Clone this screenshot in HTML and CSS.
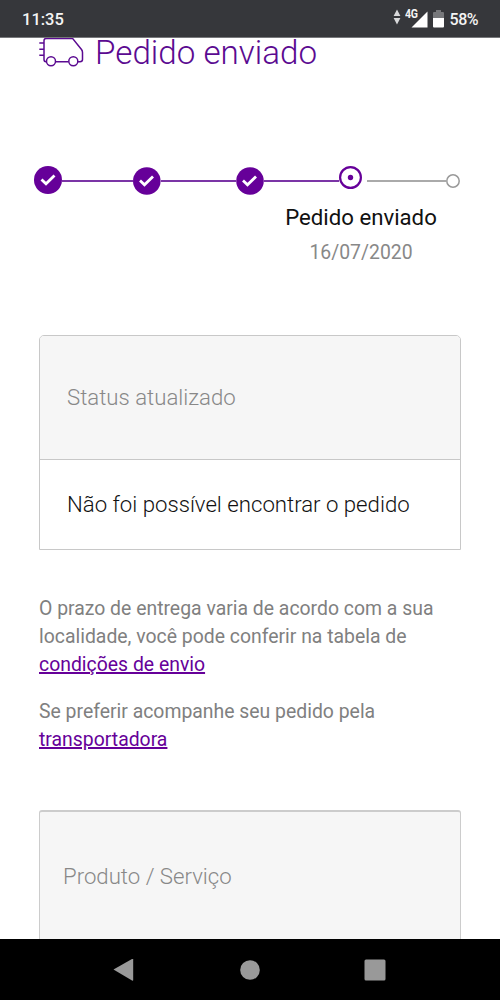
FILE: index.html
```html
<!DOCTYPE html>
<html lang="pt-BR">
<head>
<meta charset="utf-8">
<title>Pedido enviado</title>
<link rel="stylesheet" href="styles.css">
</head>
<body>
<div class="screen">
  <header class="statusbar">
    <span class="clock">11:35</span>
    <div class="indicators">
      <svg class="data" width="8" height="16" viewBox="0 0 8 16"><path d="M4 .5 7.400 7H.6zM4 15.500 7.400 9H.6z" fill="#d8d8da"/></svg>
      <span class="network">4G</span>
      <svg class="signal" width="17" height="17" viewBox="0 0 17 17"><path d="M16.5 .5v16H.5z" fill="#fff"/></svg>
      <svg class="battery" width="11" height="18" viewBox="0 0 11 18"><path d="M3 0h5v2h2a1 1 0 0 1 1 1v5H0V3a1 1 0 0 1 1-1h2z" fill="#77787b"/><path d="M0 8h11v8.5a1 1 0 0 1-1 1H1a1 1 0 0 1-1-1z" fill="#fff"/></svg>
      <span class="percent">58%</span>
    </div>
  </header>
  <main class="content">
    <h1 class="title">
      <svg class="van" width="48" height="34" viewBox="0 0 48 34" fill="none" stroke="#5b0a91" stroke-width="1.500"><path d="M8.500 23.700H8Q6 23.700 6 21.500V2.500Q6 .4 8.500 .4H34.500L43.500 11.500Q44.500 12.800 44.500 14.500V21.500Q44.500 23.700 42 23.700H40M17.700 23.700H30.600M1.300 5H6M1.300 11.200H6M1.300 17.300H6"/><circle cx="13" cy="23.200" r="4.500"/><circle cx="35.300" cy="23.200" r="4.500"/></svg>
      <span class="title-text">Pedido enviado</span>
    </h1>
    <div class="steps">
      <svg class="step" width="28" height="30" viewBox="0 0 28 30"><circle cx="14" cy="14" r="14" fill="#660099"/><path d="M7.500 13.500 12 17.800 20.500 9.500" fill="none" stroke="#fff" stroke-width="2.800"/></svg>
      <span class="line"></span>
      <svg class="step" width="28" height="30" viewBox="0 0 28 30"><circle cx="13.800" cy="15" r="13.800" fill="#660099"/><path d="M7 14.500 11.500 18.800 20 10.500" fill="none" stroke="#fff" stroke-width="2.800"/></svg>
      <span class="line line-second"></span>
      <svg class="step" width="28" height="30" viewBox="0 0 28 30"><circle cx="14" cy="15" r="13.800" fill="#660099"/><path d="M7 14.500 11.500 18.800 20 10.500" fill="none" stroke="#fff" stroke-width="2.800"/></svg>
      <span class="line line-third"></span>
      <svg class="step" width="24" height="30" viewBox="0 0 24 30"><circle cx="11.500" cy="11.500" r="10.400" fill="#fff" stroke="#660099" stroke-width="2.200"/><circle cx="11.500" cy="11.500" r="2.700" fill="#660099"/></svg>
      <span class="line line-pending"></span>
      <svg class="step" width="14" height="30" viewBox="0 0 14 30"><circle cx="7" cy="15" r="6.200" fill="#fff" stroke="#999" stroke-width="1.500"/></svg>
    </div>
    <div class="current">
      <div class="current-name"><span>Pedido enviado</span></div>
      <div class="current-date"><span>16/07/2020</span></div>
    </div>
    <section class="card">
      <div class="card-head"><span>Status atualizado</span></div>
      <div class="card-body"><span class="message">Não foi possível encontrar o pedido</span></div>
    </section>
    <p class="note"><span>O prazo de entrega varia de acordo com a sua</span><br><span>localidade, você pode conferir na tabela de</span><br><a href="#">condições de envio</a></p>
    <p class="note"><span>Se preferir acompanhe seu pedido pela</span><br><a href="#">transportadora</a></p>
    <section class="product"><span>Produto / Serviço</span></section>
  </main>
  <nav class="navbar">
    <svg width="21" height="24" viewBox="0 0 21 24"><path d="M.5 11.500 19 1Q20.200 .7 20.200 1.500V22Q20.200 23 19 22.500z" fill="#999"/></svg>
    <svg width="22" height="20" viewBox="0 0 22 20"><circle cx="12" cy="10" r="9.800" fill="#999"/></svg>
    <svg width="22" height="22" viewBox="0 0 22 22"><rect x=".5" y=".5" width="21" height="21" rx="1.500" fill="#999"/></svg>
  </nav>
</div>
</body>
</html>
```
FILE: styles.css
```css
* { box-sizing: border-box; }
body { margin: 0; background: #fff; font-family: Roboto, sans-serif; }
svg { display: block; flex: none; }
.screen { width: 500px; height: 1000px; display: flex; flex-direction: column; overflow: hidden; }
.statusbar { height: 38px; flex: none; background: #36373b; border-bottom: 1px solid #77787b; display: flex; justify-content: space-between; padding: 0 22px; color: #f4f4f4; }
.clock { font-size: 16.500px; font-weight: 500; line-height: 39px; }
.indicators { display: flex; align-items: flex-start; }
.data { margin-top: 9px; }
.network { font-size: 12px; font-weight: 700; line-height: 14px; margin: 7px 0 0 4px; width: 13px; letter-spacing: -.4px; transform: scaleX(.88); transform-origin: left; }
.signal { margin: 11px 0 0 -7px; }
.battery { margin: 10px 0 0 5px; }
.percent { font-size: 16px; font-weight: 500; line-height: 39px; margin-left: 6px; letter-spacing: -.5px; }
.content { flex: 1; min-height: 0; padding: 0 39px; white-space: nowrap; }
.title { margin: 0; height: 34px; display: flex; align-items: flex-start; color: #5b0a91; font-weight: 300; font-size: 33.200px; line-height: 29px; }
.van { margin: 0 0 0 -1px; }
.title-text { margin-left: 9px; }
.steps { display: flex; margin: 94px 0 0 -5px; height: 30px; width: 428px; }
.line { flex: none; width: 71px; height: 2px; margin-top: 14px; background: #7b35a6; }
.line-second { width: 75px; }
.line-third { width: 75px; }
.line-pending { width: 79px; margin-left: 4px; background: #aaa; }
.current { width: 152px; margin: 6px 0 0 246px; text-align: center; display: flex; flex-direction: column; align-items: center; }
.current-name { font-size: 22.200px; line-height: 30px; color: #111; }
.current-date { font-size: 19.400px; line-height: 30px; margin-top: 6px; color: #888; }
.card { margin-top: 67px; width: 422px; height: 215px; border: 1px solid #c8c8c8; border-radius: 5px 5px 0 0; overflow: hidden; display: flex; flex-direction: column; font-weight: 300; font-size: 22.200px; }
.card-head { height: 124px; display: flex; align-items: center; padding: 0 0 2px 27px; background: #f6f6f6; color: #888; border-bottom: 1px solid #c8c8c8; }
.card-body { flex: 1; display: flex; align-items: center; padding: 0 0 1px 27px; color: #111; }
.note { margin: 45px 0 0; font-size: 19.400px; line-height: 28px; color: #808080; }
.note + .note { margin-top: 19px; }
.note a { color: #660099; text-decoration: underline; text-decoration-thickness: 1.500px; }
.product { margin-top: 56px; width: 422px; height: 135px; border: 1px solid #ccc; border-top-width: 2px; border-radius: 3px 3px 0 0; background: #f6f6f6; padding: 49px 0 0 23px; font-size: 22.200px; line-height: 30px; font-weight: 300; color: #888; }
.navbar { height: 61px; flex: none; background: #000; display: flex; align-items: center; justify-content: space-between; padding: 0 114px 0 113px; }
```
